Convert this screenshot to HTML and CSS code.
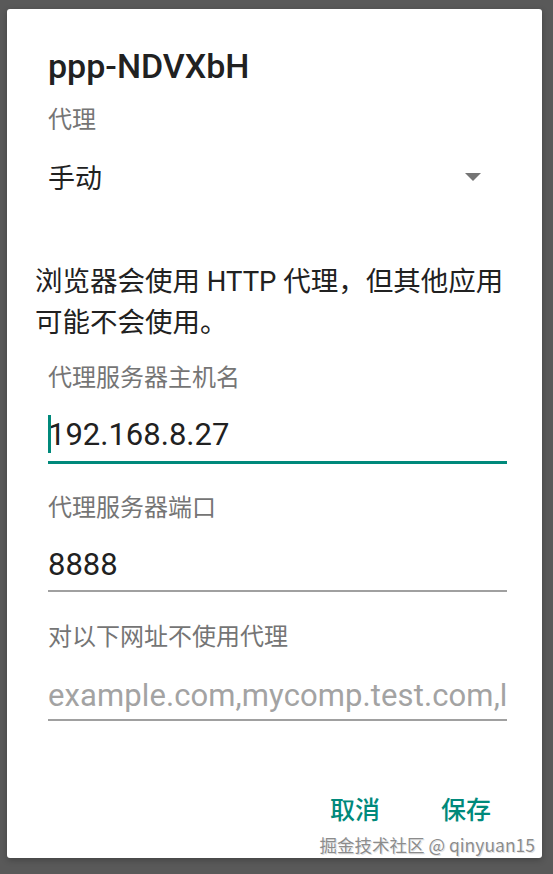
FILE: index.html
```html
<!DOCTYPE html>
<html lang="zh-CN">
<head>
  <meta charset="UTF-8">
  <meta name="viewport" content="width=device-width, initial-scale=1.0">
  <title>代理设置</title>
  <link rel="stylesheet" href="styles.css">
</head>
<body>
  <div class="screen">
    <div class="dialog">
      <h1 class="title">ppp-NDVXbH</h1>

      <div class="label label-proxy">代理</div>
      <div class="spinner">
        <span>手动</span>
        <span class="arrow"></span>
      </div>

      <p class="message">浏览器会使用 HTTP 代理，但其他应用可能不会使用。</p>

      <div class="label">代理服务器主机名</div>
      <div class="field field-host focused"><span class="cursor"></span>192.168.8.27</div>

      <div class="label label-port">代理服务器端口</div>
      <div class="field field-port">8888</div>

      <div class="label label-bypass">对以下网址不使用代理</div>
      <div class="field field-bypass placeholder">example.com,mycomp.test.com,localhost</div>

      <div class="buttons">
        <button type="button" class="btn">取消</button>
        <button type="button" class="btn">保存</button>
      </div>
    </div>

    <div class="watermark">掘金技术社区 @ qinyuan15</div>
  </div>
</body>
</html>
```

FILE: styles.css
```css
body {
  margin: 0;
  background-color: #595959;
  font-family: Roboto, "Noto Sans CJK SC", sans-serif;
}
.screen {
  position: relative;
  width: 553px;
  height: 874px;
  overflow: hidden;
}
.dialog {
  box-sizing: border-box;
  width: 535px;
  height: 849px;
  margin: 9px 0 0 7px;
  padding: 37px 35px 0 41px;
  background: #ffffff;
  border-radius: 3px;
  box-shadow: 0 2px 6px rgba(0, 0, 0, 0.25);
}
.title {
  margin: 0;
  font-size: 34px;
  line-height: 40px;
  font-weight: 500;
  color: #212121;
}
.label {
  margin-top: 19px;
  font-size: 24px;
  line-height: 32px;
  color: #757575;
}
.label-proxy {
  margin-top: 18px;
}
.label-port {
  margin-top: 28px;
}
.label-bypass {
  margin-top: 29px;
}
.spinner {
  display: flex;
  align-items: center;
  justify-content: space-between;
  height: 49px;
  margin-top: 16px;
  padding-right: 26px;
  font-size: 27px;
  color: #212121;
}
.arrow {
  width: 0;
  height: 0;
  border-left: 8px solid transparent;
  border-right: 8px solid transparent;
  border-top: 8px solid #757575;
}
.message {
  margin: 60px -13px 0 -13px;
  font-size: 27.5px;
  line-height: 41px;
  color: #212121;
}
.field {
  position: relative;
  margin-top: 21px;
  font-size: 31px;
  line-height: 40px;
  color: #212121;
  white-space: nowrap;
  overflow: hidden;
}
.field-host {
  padding-bottom: 6px;
  border-bottom: 3px solid #00897b;
}
.field-port {
  padding-bottom: 5px;
  border-bottom: 2px solid #a0a0a0;
}
.field-bypass {
  margin-top: 23px;
  padding-bottom: 3px;
  border-bottom: 2px solid #a0a0a0;
}
.placeholder {
  color: #a3a3a3;
  letter-spacing: 0.1px;
}
.cursor {
  position: absolute;
  left: 0;
  top: -2px;
  width: 3px;
  height: 40px;
  background: #00897b;
}
.buttons {
  display: flex;
  justify-content: flex-end;
  gap: 61px;
  margin-top: 72px;
  padding-right: 16px;
}
.btn {
  padding: 0;
  border: none;
  background: none;
  font-family: Roboto, "Noto Sans CJK SC", sans-serif;
  font-size: 25px;
  line-height: 36px;
  font-weight: 500;
  color: #00897b;
}
.watermark {
  position: absolute;
  right: 18px;
  top: 834px;
  font-family: "Noto Sans CJK SC", sans-serif;
  font-size: 17.5px;
  line-height: 22px;
  color: #8c8c8c;
  text-shadow: 0 0 1px #ffffff, 1px 1px 0 #e0e0e0;
}
```
